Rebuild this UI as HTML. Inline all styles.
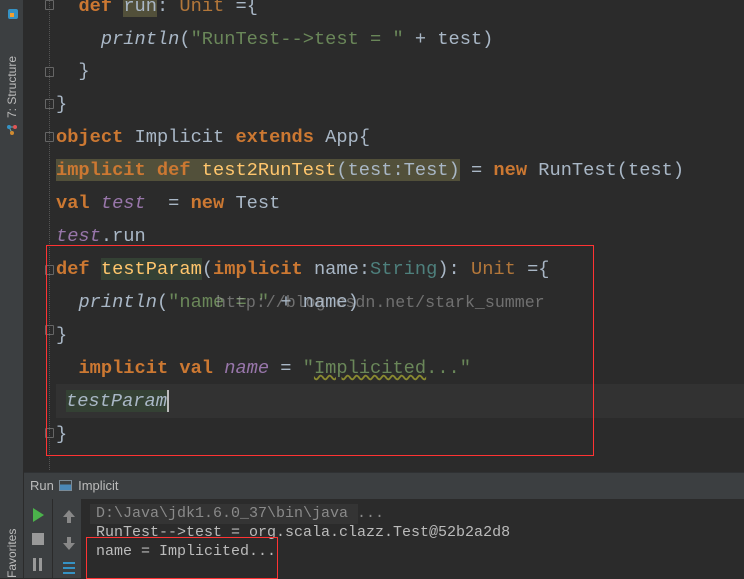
<!DOCTYPE html>
<html><head><meta charset="utf-8"><style>
*{margin:0;padding:0;box-sizing:border-box}
body{width:744px;height:578px;overflow:hidden;background:#2b2b2b;position:relative;font-family:"Liberation Mono",monospace}
.side{position:absolute;left:0;top:0;width:24px;height:578px;background:#3c3f41;border-right:1px solid #2b2b2b}
.l{position:absolute;left:56px;font-size:18.7px;white-space:pre;color:#a9b7c6;line-height:33px;height:33px}
.k{color:#cc7832;font-weight:bold}
.s{color:#6a8759}
.i{color:#9876aa;font-style:italic}
.f{color:#a9b7c6;font-style:italic}
.m{color:#ffc66d}
.t{color:#4e807d}
.u{color:#b3773a}
.hl{background:#52503a}
.hl2{background:#344134}
.fold{position:absolute;left:45px;width:9px;height:10px;border:1px solid #666;border-radius:1px}
.vtext{position:absolute;color:#bbb;font-family:"Liberation Sans",sans-serif;font-size:12px;transform:rotate(-90deg);transform-origin:left top;white-space:nowrap}
.c{position:absolute;left:96px;font-size:15px;white-space:pre;color:#bbbbbb;line-height:19px}
.box{position:absolute;border:1px solid #ff3333;z-index:10}
</style></head><body>
<div class="side"></div>
<div style="position:absolute;left:8px;top:9px;width:10px;height:10px;background:#3592c4;border-radius:2px"></div>
<div style="position:absolute;left:10px;top:13px;width:4px;height:4px;background:#f0a030"></div>
<div class="vtext" style="left:5px;top:118px">7: Structure</div>
<div style="position:absolute;left:6px;top:123px;width:12px;height:12px"><svg width="12" height="12"><line x1="3" y1="3" x2="9" y2="3" stroke="#7aa" /><line x1="3" y1="3" x2="6" y2="9" stroke="#7aa"/><circle cx="3" cy="3" r="2" fill="#3592c4"/><circle cx="9" cy="3" r="2" fill="#e05555"/><circle cx="6" cy="9" r="2" fill="#d08a30"/></svg></div>
<div class="vtext" style="left:5px;top:578px">Favorites</div>
<div style="position:absolute;left:49px;top:0;height:470px;border-left:1px dotted #555"></div>
<div style="position:absolute;left:56px;top:384px;width:688px;height:34px;background:#323232"></div>
<div class="fold" style="top:0"></div><div class="fold" style="top:67px"></div><div class="fold" style="top:99px"></div><div class="fold" style="top:132px"></div><div class="fold" style="top:265px"></div><div class="fold" style="top:325px"></div><div class="fold" style="top:428px"></div>
<div class="l" style="top:-10px">  <span class="k">def</span> <span class="hl">run</span>: <span class="u">Unit</span> ={</div>
<div class="l" style="top:23px">    <span class="f">println</span>(<span class="s">"RunTest-->test = "</span> + test)</div>
<div class="l" style="top:55px">  }</div>
<div class="l" style="top:88px">}</div>
<div class="l" style="top:121px"><span class="k">object</span> Implicit <span class="k">extends</span> App{</div>
<div class="l" style="top:154px"><span class="hl"><span class="k">implicit def</span> <span class="m">test2RunTest</span>(test:Test)</span> = <span class="k">new</span> RunTest(test)</div>
<div class="l" style="top:187px"><span class="k">val</span> <span class="i">test</span>  = <span class="k">new</span> Test</div>
<div class="l" style="top:220px"><span class="i">test</span>.run</div>
<div class="l" style="top:253px"><span class="k">def</span> <span class="m hl2">testParam</span>(<span class="k">implicit</span> name:<span class="t">String</span>): <span class="u">Unit</span> ={</div>
<div class="l" style="top:286px">  <span class="f">println</span>(<span class="s">"name = "</span> + name)</div>
<div class="l" style="top:286px;left:216px;color:rgba(170,170,170,.55);font-size:16.6px">http://blog.csdn.net/stark_summer</div>
<div class="l" style="top:319px">}</div>
<div class="l" style="top:352px">  <span class="k">implicit val</span> <span class="i">name</span> = <span class="s">"<span style="text-decoration:underline wavy #8a8a30">Implicited</span>..."</span></div>
<div class="l" style="top:385px;left:66px"><span class="f hl2">testParam</span><span style="display:inline-block;width:2px;height:22px;background:#bbb;vertical-align:middle"></span></div>
<div class="l" style="top:418px">}</div>
<div class="box" style="left:46px;top:245px;width:548px;height:211px"></div>
<div style="position:absolute;left:24px;top:472px;width:720px;height:1px;background:#2f3133"></div>
<div style="position:absolute;left:24px;top:473px;width:720px;height:26px;background:#3c3f41;font-family:'Liberation Sans',sans-serif;font-size:13px;color:#bbb;line-height:26px;padding-left:6px">Run <span style="display:inline-block;width:13px;height:11px;border:1px solid #7a8a96;vertical-align:-1px;margin:0 2px;background:linear-gradient(#3c3f41 40%,#4a88b8 40%)"></span> Implicit</div>
<div style="position:absolute;left:24px;top:499px;width:28px;height:79px;background:#3c3f41"></div>
<div style="position:absolute;left:53px;top:499px;width:28px;height:79px;background:#3c3f41"></div>
<div style="position:absolute;left:81px;top:499px;width:663px;height:79px;background:#2b2b2b"></div>
<svg style="position:absolute;left:30px;top:506px" width="16" height="72"><polygon points="3,2 14,9 3,16" fill="#4bb34b"/><rect x="2" y="27" width="12" height="12" fill="#999"/><rect x="3" y="52" width="3" height="13" fill="#999"/><rect x="9" y="52" width="3" height="13" fill="#999"/></svg>
<svg style="position:absolute;left:60px;top:508px" width="18" height="70"><polygon points="9,2 15,9 11,9 11,15 7,15 7,9 3,9" fill="#888"/><polygon points="9,42 15,35 11,35 11,29 7,29 7,35 3,35" fill="#888"/><rect x="3" y="54" width="12" height="2" fill="#3592c4"/><rect x="3" y="59" width="12" height="2" fill="#3592c4"/><rect x="3" y="64" width="12" height="2" fill="#3592c4"/></svg>
<div style="position:absolute;left:90px;top:504px;width:268px;height:20px;background:#343434"></div>
<div class="c" style="top:504px;color:#8a8a8a">D:\Java\jdk1.6.0_37\bin\java ...</div>
<div class="c" style="top:523px">RunTest-->test = org.scala.clazz.Test@52b2a2d8</div>
<div class="c" style="top:542px">name = Implicited...</div>
<div class="box" style="left:86px;top:537px;width:192px;height:42px"></div>
</body></html>
